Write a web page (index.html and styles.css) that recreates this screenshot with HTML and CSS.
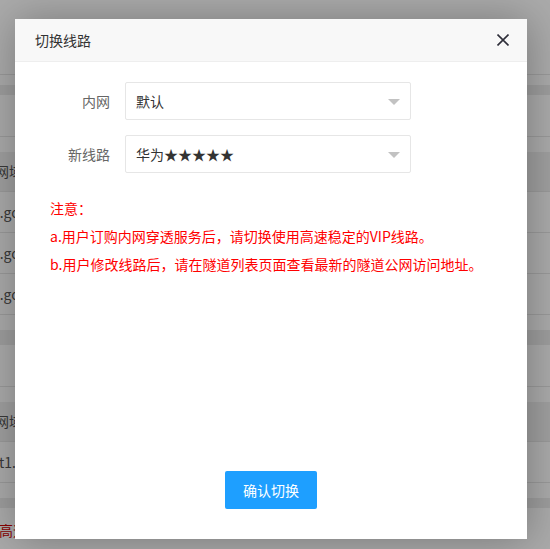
FILE: index.html
```html
<!DOCTYPE html>
<html lang="zh-CN">
<head>
<meta charset="utf-8">
<title>切换线路</title>
<link rel="stylesheet" href="styles.css">
</head>
<body>
<div class="page">
  <div class="gap g1"></div>
  <div class="band b1"></div>
  <div class="gap g2"></div>
  <div class="table">
    <div class="row head">公网域名</div>
    <div class="row">abc.gofrp.cn</div>
    <div class="row">abc.gofrp.cn</div>
    <div class="row">abc.gofrp.cn</div>
  </div>
  <div class="gap g3"></div>
  <div class="band b2"></div>
  <div class="gap g4"></div>
  <div class="table">
    <div class="row head">公网域名</div>
    <div class="row t1">t1.gofrp.cn</div>
  </div>
  <div class="gap g5"></div>
  <div class="band b3"></div>
  <div class="red">请使用高速线路</div>
</div>

<div class="shade"></div>

<div class="layer">
  <div class="layer-title">
    <span>切换线路</span>
    <svg class="close" viewBox="0 0 12 12" width="12" height="12"><path d="M0.5 0.5L11.5 11.5M11.5 0.5L0.5 11.5" stroke="#2f2f3a" stroke-width="1.6" fill="none"/></svg>
  </div>
  <div class="layer-content">
    <div class="form-item">
      <label class="form-label">内网</label>
      <div class="select"><span>默认</span><i class="arrow"></i></div>
    </div>
    <div class="form-item">
      <label class="form-label">新线路</label>
      <div class="select"><span>华为★★★★★</span><i class="arrow"></i></div>
    </div>
    <div class="notes">
      <p>注意：</p>
      <p>a.用户订购内网穿透服务后，请切换使用高速稳定的VIP线路。</p>
      <p>b.用户修改线路后，请在隧道列表页面查看最新的隧道公网访问地址。</p>
    </div>
    <div class="actions"><button class="btn">确认切换</button></div>
  </div>
</div>
</body>
</html>
```

FILE: styles.css
```css
html, body {
  margin: 0;
  padding: 0;
}
body {
  width: 550px;
  height: 549px;
  overflow: hidden;
  background: #fff;
  font-family: "Noto Sans CJK SC", "Microsoft YaHei", sans-serif;
  font-size: 14px;
  color: #666;
  position: relative;
}
.page {
  display: flex;
  flex-direction: column;
  margin-left: -19px;
}
.gap { background: #fff; }
.g1 { height: 74px; border-bottom: 1px solid #e6e6e6; }
.band { background: #ececec; }
.b1 { height: 10px; margin-top: 10px; }
.g2 { height: 41px; border-bottom: 1px solid #e6e6e6; }
.table { margin-top: 15px; }
.row {
  height: 40px;
  line-height: 40px;
  border-bottom: 1px solid #e6e6e6;
  color: #555;
  white-space: nowrap;
  font-size: 14px;
}
.row:not(.head) { text-indent: -5px; }
.row.t1 { text-indent: 18px; }
.head { background: #efefef; height: 39px; line-height: 39px; }
.g3 { height: 15px; }
.b2 { height: 15px; }
.g4 { height: 41px; border-bottom: 1px solid #e6e6e6; }
.g5 { height: 15px; }
.b3 { height: 10px; }
.red { color: #c00; line-height: 44px; text-indent: -24px; }

.shade {
  position: absolute;
  inset: 0;
  background: rgba(0, 0, 0, 0.33);
}

.layer {
  position: absolute;
  left: 15px;
  top: 19px;
  width: 512px;
  height: 520px;
  background: #fff;
  box-shadow: 1px 1px 40px rgba(0, 0, 0, 0.3);
  display: flex;
  flex-direction: column;
}
.layer-title {
  height: 42px;
  line-height: 42px;
  flex: none;
  background: #f8f8f8;
  border-bottom: 1px solid #eee;
  padding: 0 18px 0 20px;
  color: #333;
  font-size: 14px;
  display: flex;
  justify-content: space-between;
  align-items: center;
}
.close { display: block; }
.layer-content {
  flex: 1;
  display: flex;
  flex-direction: column;
  padding-top: 20px;
}
.form-item {
  display: flex;
  align-items: center;
  margin-bottom: 15px;
}
.form-label {
  width: 110px;
  box-sizing: border-box;
  padding-right: 15px;
  text-align: right;
  color: #666;
  line-height: 20px;
}
.select {
  width: 286px;
  height: 38px;
  box-sizing: border-box;
  border: 1px solid #e6e6e6;
  border-radius: 2px;
  padding-left: 10px;
  display: flex;
  align-items: center;
  justify-content: space-between;
  color: #333;
}
.arrow {
  width: 0;
  height: 0;
  border-left: 6px solid transparent;
  border-right: 6px solid transparent;
  border-top: 6px solid #c2c2c2;
  margin-right: 10px;
  margin-top: 2px;
}
.notes {
  padding-left: 35px;
  margin-top: 6px;
  color: #f00;
}
.notes p {
  margin: 0;
  line-height: 28px;
}
.actions {
  margin-top: auto;
  padding-bottom: 30px;
  display: flex;
  justify-content: center;
}
.btn {
  height: 38px;
  padding: 0 18px;
  border: none;
  border-radius: 2px;
  background: #1e9fff;
  color: #fff;
  font-family: inherit;
  font-size: 14px;
  line-height: 38px;
}
```
